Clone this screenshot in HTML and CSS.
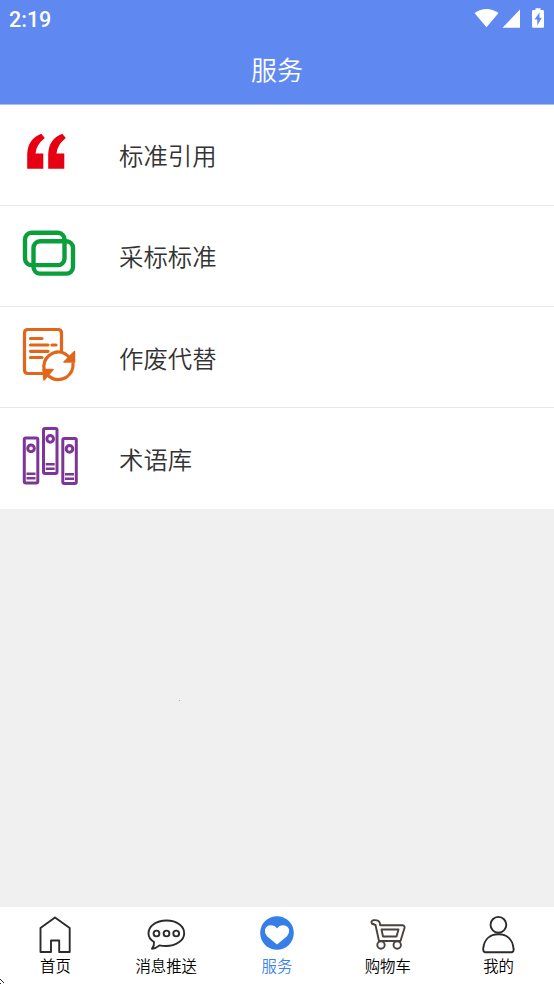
FILE: index.html
```html
<!DOCTYPE html>
<html lang="zh-CN">
<head>
<meta charset="utf-8">
<title>服务</title>
<link rel="stylesheet" href="styles.css">
</head>
<body>
<div class="app">
  <header class="header">
    <div class="status">
      <span class="time">2:19</span>
      <svg class="status-icons" viewBox="470 0 84 38" fill="#fff">
        <path d="M474.500 13Q486.500 5 498.500 13L486.500 27.300Z"/>
        <path d="M520 9.500V27.700H502.500Z"/>
        <path fill-rule="evenodd" d="M535.500 8.200h5v1.800h2.300q1.200 0 1.200 1.200v15.300q0 1.200-1.200 1.200h-9.600q-1.200 0-1.200-1.200v-15.300q0-1.200 1.200-1.200h2.300zM539.500 12.500l-5 7h2.800v6l4.500-7.800h-2.300z"/>
      </svg>
    </div>
    <h1 class="title">服务</h1>
  </header>
  <main class="content">
    <ul class="list">
      <li class="row">
        <svg class="row-icon" viewBox="10 105 80 100" fill="#e60012">
          <path id="quote" d="M41.300 133.800L44.800 138Q36 145 35.500 153.500H43.300V168.800H27.200V154Q27.700 139 41.300 133.800Z"/>
          <use href="#quote" x="21"/>
        </svg>
        <span>标准引用</span>
      </li>
      <li class="row">
        <svg class="row-icon" viewBox="10 206 80 100" fill="none" stroke="#0b9f3c" stroke-width="4.400">
          <rect x="25" y="232.800" width="39.500" height="32.300" rx="6.500"/>
          <rect x="33.500" y="241.300" width="39.500" height="32.300" rx="6.500"/>
        </svg>
        <span>采标标准</span>
      </li>
      <li class="row">
        <svg class="row-icon" viewBox="10 307 80 100" fill="none" stroke="#e2661a" stroke-width="3.200">
          <path d="M44 373.500H28Q24.500 373.500 24.500 370V333Q24.500 329.500 28 329.500H58Q61.500 329.500 61.500 333V352"/>
          <path d="M30.500 338.500H42M30.500 345H48M52 345H56M30.500 351.300H48M30.500 357.500H42" stroke-linecap="round"/>
          <path d="M44.200 370Q42.500 361 49 355.500Q60 347.500 69.500 357.500M48 375.500Q56 382.500 66 377.500Q74 372 73 362.500"/>
          <path d="M74.500 351.500V362H64ZM43 369.500H53L44 380Z" fill="#e2661a" stroke-width="1.500" stroke-linejoin="round"/>
        </svg>
        <span>作废代替</span>
      </li>
      <li class="row">
        <svg class="row-icon" viewBox="10 409 80 100" fill="none" stroke="#7d3698" stroke-width="3">
          <g id="binder">
            <rect x="24.300" y="438" width="13.500" height="45" rx="1.500"/>
            <circle cx="31" cy="448.400" r="3.300"/>
            <path d="M26.500 473.800H35.500M26.500 478.200H35.500" stroke-width="2.500"/>
          </g>
          <use href="#binder" x="19.200" y="-9.500"/>
          <use href="#binder" x="38.500" y="0.500"/>
        </svg>
        <span>术语库</span>
      </li>
    </ul>
    <i class="speck"></i>
  </main>
  <nav class="tabs">
    <a class="tab">
      <svg class="tab-icon" viewBox="32 911 46 44">
        <path d="M55 917.500L69.700 928V952H59.200V940.500H51V952H40.500V928Z"/>
      </svg>
      <span>首页</span>
    </a>
    <a class="tab">
      <svg class="tab-icon" viewBox="143 911 46 44">
        <path d="M152 948.700Q154.500 945.500 154 942Q148.500 938.500 148.500 933.500C148.500 926 156 920.500 166.500 920.500S184.200 926 184.200 933.200S176 946 166 946Q162.500 946 159.500 945.400Q156 948.500 152 948.700Z"/>
        <circle cx="156.500" cy="933.500" r="2.900"/><circle cx="166.500" cy="933.500" r="2.900"/><circle cx="176.200" cy="933.500" r="2.900"/>
      </svg>
      <span>消息推送</span>
    </a>
    <a class="tab active">
      <svg class="tab-icon" viewBox="254 911 46 44">
        <circle class="disc" cx="277" cy="933" r="16.800"/>
        <path class="heart" d="M277 944.500L267 936.200Q264.300 933 265 929.800Q266.300 925.300 270.500 925.200Q275 925.200 277 928.500Q279.500 925 283.500 925.200Q288.200 925.600 289.100 930Q289.600 933.500 287 936.200Z"/>
      </svg>
      <span>服务</span>
    </a>
    <a class="tab">
      <svg class="tab-icon cart" viewBox="365 911 46 44">
        <path d="M379 941L375.500 925L371.800 923.500Q370.800 921 373 920.300Q378.500 919.500 379.700 922.500L380.200 925.300H403Q405 926 404.500 928L400.500 941Z"/>
        <path d="M381.500 929.500H398.500L396.500 936.500H383Z"/>
        <circle cx="381" cy="945" r="3.700"/><circle cx="397.200" cy="945" r="3.700"/>
      </svg>
      <span>购物车</span>
    </a>
    <a class="tab">
      <svg class="tab-icon" viewBox="475.800 911 46 44">
        <circle cx="498.200" cy="924.800" r="7.900"/>
        <path d="M484.500 952.200H512Q513.800 951.500 513.300 948.500C512.500 939 506.500 934.300 498.200 934.300S484 939 483 948.500Q482.700 951.500 484.500 952.200Z"/>
      </svg>
      <span>我的</span>
    </a>
  </nav>
  <svg class="pointer" viewBox="0 0 5 5"><path d="M0 0.500H1M1 1.500H2M2 2.500H3M3 3.500H4M0 4.500H1"/></svg>
</div>
</body>
</html>
```
FILE: styles.css
```css
* {
  box-sizing: border-box;
}

body {
  margin: 0;
  font-family: "Noto Sans CJK SC", sans-serif;
  color: #333;
}

.app {
  position: relative;
  display: flex;
  flex-direction: column;
  height: 984px;
  overflow: hidden;
  background: #f0f0f0;
}

.header {
  height: 105px;
  background: #5f89f0;
  border-bottom: 1px solid #a9bef5;
  color: #fff;
}

.status {
  display: flex;
  justify-content: space-between;
  align-items: center;
  height: 38px;
  padding-left: 9px;
}

.time {
  padding-top: 2px;
  font: 500 21.500px/38px Roboto, sans-serif;
}

.status-icons {
  width: 84px;
  height: 38px;
}

.title {
  margin: 0;
  font-size: 26px;
  font-weight: 350;
  line-height: 62px;
  text-align: center;
}

.content {
  position: relative;
  flex: 1;
}

.list {
  margin: 0;
  padding: 0;
  list-style: none;
  background: #fff;
}

.row {
  display: flex;
  align-items: center;
  height: 101px;
  padding-left: 10px;
  border-bottom: 1px solid #e8e8e8;
  font-size: 24.400px;
  font-weight: 350;
}

.row span {
  padding-bottom: 2px;
}

.row:nth-child(n+3) span {
  padding-bottom: 0;
}

.row:last-child {
  border-bottom: 0;
}

.row-icon {
  width: 80px;
  height: 100px;
  margin-right: 29px;
}

.speck {
  position: absolute;
  left: 179px;
  top: 595px;
  width: 1px;
  height: 1px;
  background: #aaa;
}

.tabs {
  display: grid;
  grid-template-columns: repeat(5, 1fr);
  height: 77px;
  padding-top: 4px;
  background: #fff;
}

.tab {
  display: flex;
  flex-direction: column;
  align-items: center;
  color: #000;
  font-size: 15.400px;
  font-weight: 350;
  line-height: 20px;
}

.tab-icon {
  width: 46px;
  height: 44px;
  fill: none;
  stroke: #2b2b2b;
  stroke-width: 1.900;
  stroke-linejoin: round;
}

.cart {
  stroke: #49423e;
}

.active {
  color: #3b82e8;
}

.active .disc {
  fill: #367fe9;
  stroke: none;
}

.active .heart {
  fill: #fff;
  stroke: none;
}

.pointer {
  position: absolute;
  left: 0;
  bottom: 0;
  width: 5px;
  height: 5px;
  stroke: #222;
}
```
